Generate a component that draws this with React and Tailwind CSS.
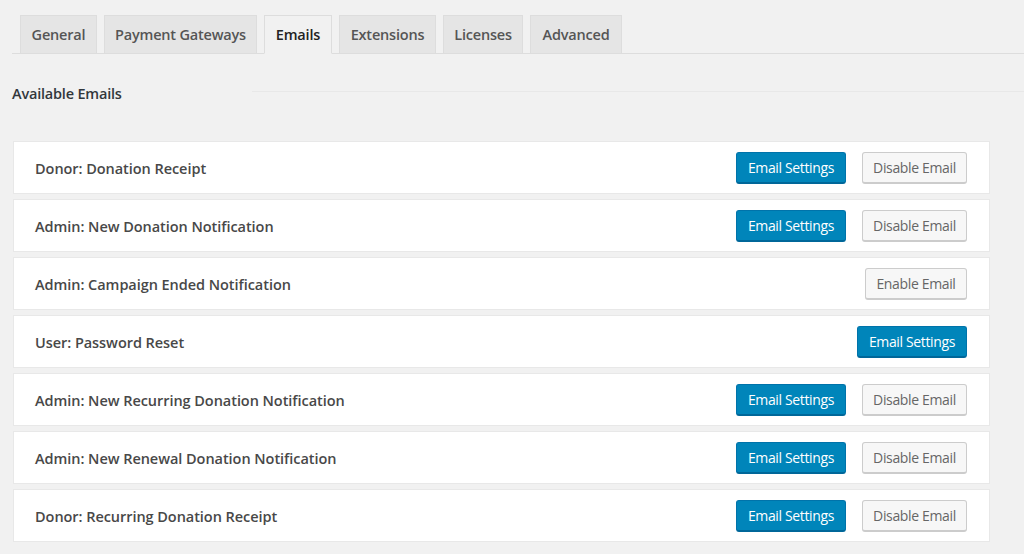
const TABS = ["General", "Payment Gateways", "Emails", "Extensions", "Licenses", "Advanced"];
const TAB_WIDTHS = {
  General: "w-[77px]",
  "Payment Gateways": "w-[153px]",
  Emails: "w-[68px]",
  Extensions: "w-[97px]",
  Licenses: "w-[80px]",
  Advanced: "w-[92px]",
};

const EMAILS = [
  { name: "Donor: Donation Receipt", settings: true, toggle: "Disable Email" },
  { name: "Admin: New Donation Notification", settings: true, toggle: "Disable Email" },
  { name: "Admin: Campaign Ended Notification", settings: false, toggle: "Enable Email" },
  { name: "User: Password Reset", settings: true, toggle: null },
  { name: "Admin: New Recurring Donation Notification", settings: true, toggle: "Disable Email" },
  { name: "Admin: New Renewal Donation Notification", settings: true, toggle: "Disable Email" },
  { name: "Donor: Recurring Donation Receipt", settings: true, toggle: "Disable Email" },
];

function Tab({ label }) {
  const active = label === "Emails";
  return (
    <div
      className={
        "h-[39px] mb-[-1px] pt-px flex items-center justify-center border border-[#ddd] text-[14.5px] font-semibold tracking-[-0.2px] " +
        TAB_WIDTHS[label] +
        (active ? " bg-[#f1f1f1] border-b-[#f1f1f1] text-[#222]" : " bg-[#e5e5e5] text-[#555]")
      }
    >
      {label}
    </div>
  );
}

function EmailRow({ email }) {
  return (
    <div className="h-[53px] mb-[5px] pl-[21px] pr-[22px] flex items-center bg-white border border-[#e8e8e8]">
      <span className="pt-[2px] text-[14.5px] font-semibold tracking-[-0.05px] text-[#484848] flex-1">{email.name}</span>
      {email.settings && (
        <button className="h-[32px] w-[110px] rounded-[3px] bg-[#0085ba] border border-[#0073aa] border-b-2 border-b-[#006799] text-[14px] tracking-[-0.35px] text-white">
          Email Settings
        </button>
      )}
      {email.toggle && (
        <button
          className={
            "h-[32px] rounded-[3px] bg-[#f7f7f7] border border-[#ccc] border-b-2 text-[14px] tracking-[-0.35px] text-[#666] " +
            (email.toggle === "Disable Email" ? "w-[105px] ml-[16px]" : "w-[102px]")
          }
        >
          {email.toggle}
        </button>
      )}
    </div>
  );
}

export default function App() {
  return (
    <div className="w-[1024px] h-[554px] overflow-hidden bg-[#f1f1f1] font-['Open_Sans',sans-serif]">
      <div className="ml-[12px] pt-[15px] pl-[8px] h-[54px] flex items-end gap-[7px] border-b border-[#ddd]">
        {TABS.map(t => <Tab key={t} label={t} />)}
      </div>
      <div className="ml-[12px] mt-[29px] h-[22px] flex items-center">
        <h2 className="w-[240px] text-[14.5px] font-semibold tracking-[-0.2px] text-[#32373c]">Available Emails</h2>
        <div className="flex-1 h-px mb-[6px] bg-[#e8e8e8]" />
      </div>
      <div className="ml-[13px] w-[977px] mt-[36px]">
        {EMAILS.map(e => <EmailRow key={e.name} email={e} />)}
      </div>
    </div>
  );
}
